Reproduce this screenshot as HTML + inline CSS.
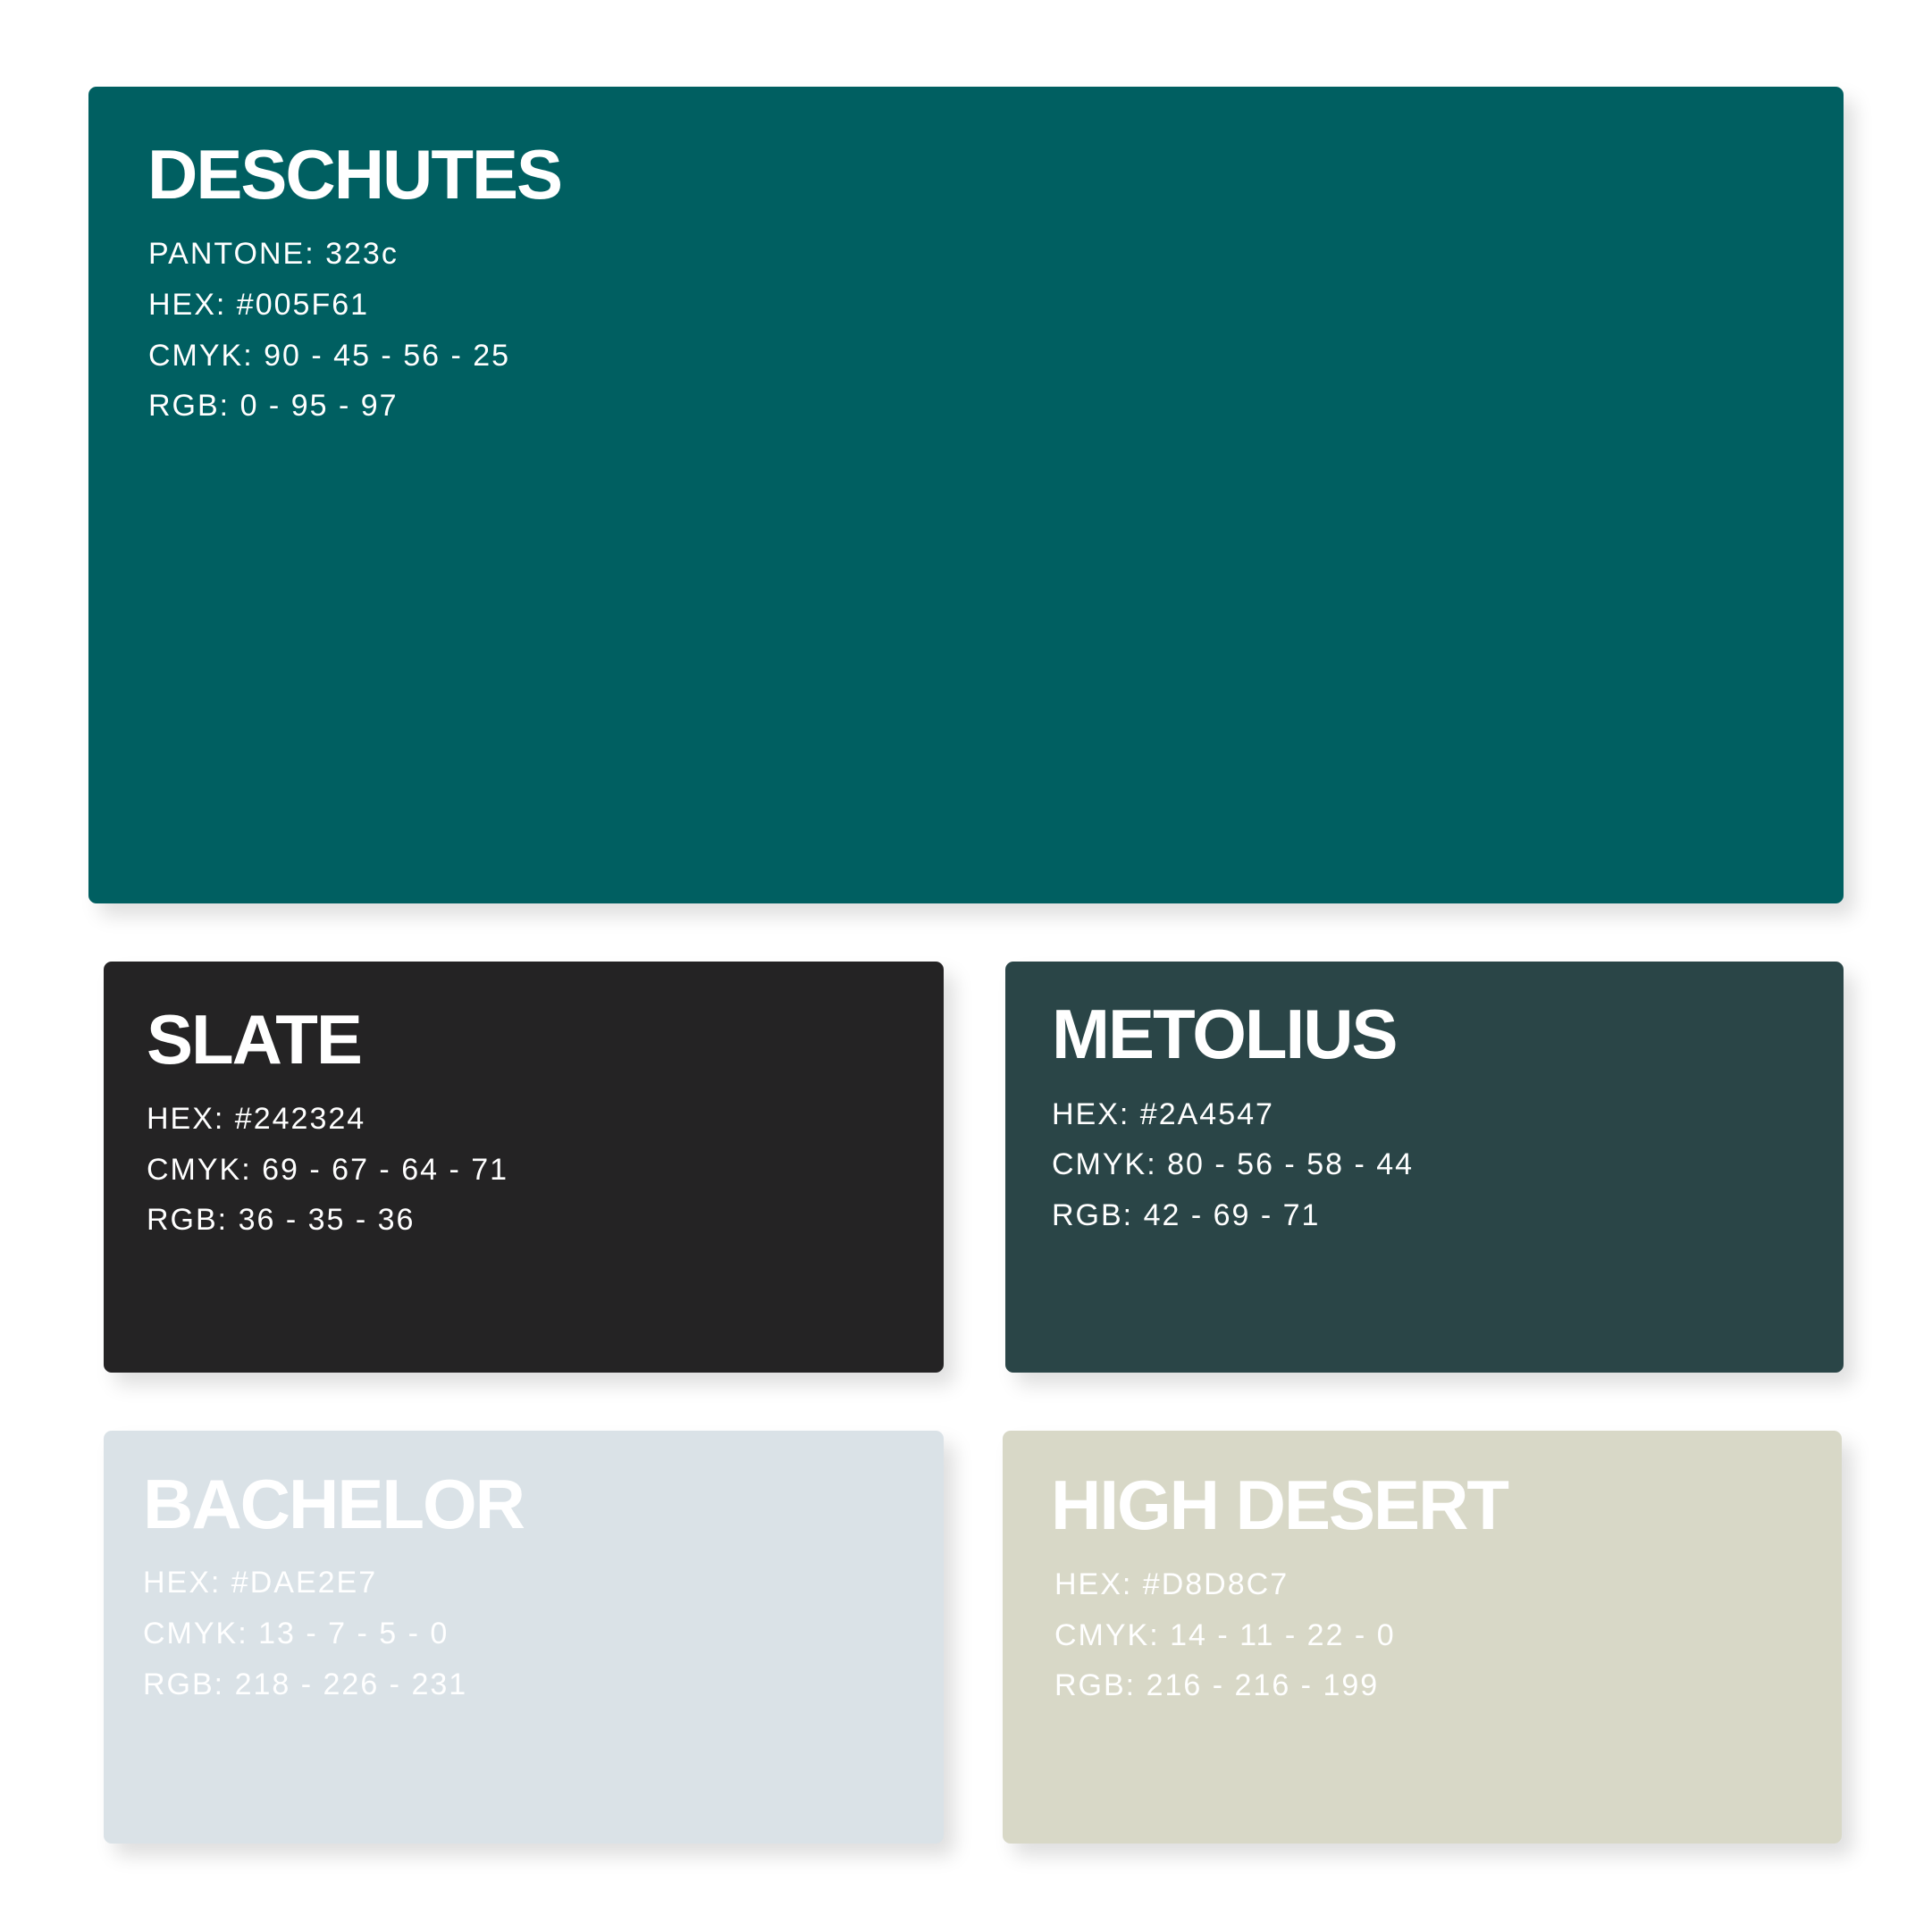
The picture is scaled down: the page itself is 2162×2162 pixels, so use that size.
<!DOCTYPE html>
<html><head><meta charset="utf-8"><style>
html,body{margin:0;padding:0;background:#fff;}
body{width:2162px;height:2162px;position:relative;overflow:hidden;font-family:"Liberation Sans",sans-serif;}
.card{position:absolute;border-radius:9px;box-shadow:12px 14px 22px rgba(0,0,0,0.13);}
.t{position:absolute;color:#fff;font-weight:bold;font-size:78px;line-height:78px;letter-spacing:-2px;white-space:nowrap;}
.l{position:absolute;color:#fff;font-size:34px;line-height:34px;letter-spacing:2px;white-space:nowrap;}
</style></head><body>
<div class="card" style="left:99px;top:97px;width:1964px;height:914px;background:#005F61"></div>
<div class="card" style="left:116px;top:1076px;width:940px;height:460px;background:#242324"></div>
<div class="card" style="left:1125px;top:1076px;width:938px;height:460px;background:#2A4547"></div>
<div class="card" style="left:116px;top:1601px;width:940px;height:462px;background:#DAE2E7"></div>
<div class="card" style="left:1122px;top:1601px;width:939px;height:462px;background:#D8D8C7"></div>

<div class="t" style="left:165px;top:156px">DESCHUTES</div>
<div class="l" style="left:166px;top:267px">PANTONE: 323c</div>
<div class="l" style="left:166px;top:324px">HEX: #005F61</div>
<div class="l" style="left:166px;top:381px">CMYK: 90 - 45 - 56 - 25</div>
<div class="l" style="left:166px;top:437px">RGB: 0 - 95 - 97</div>

<div class="t" style="left:164px;top:1124px">SLATE</div>
<div class="l" style="left:164px;top:1235px">HEX: #242324</div>
<div class="l" style="left:164px;top:1292px">CMYK: 69 - 67 - 64 - 71</div>
<div class="l" style="left:164px;top:1348px">RGB: 36 - 35 - 36</div>

<div class="t" style="left:1177px;top:1118px">METOLIUS</div>
<div class="l" style="left:1177px;top:1230px">HEX: #2A4547</div>
<div class="l" style="left:1177px;top:1286px">CMYK: 80 - 56 - 58 - 44</div>
<div class="l" style="left:1177px;top:1343px">RGB: 42 - 69 - 71</div>

<div class="t" style="left:160px;top:1644px">BACHELOR</div>
<div class="l" style="left:160px;top:1754px">HEX: #DAE2E7</div>
<div class="l" style="left:160px;top:1811px">CMYK: 13 - 7 - 5 - 0</div>
<div class="l" style="left:160px;top:1868px">RGB: 218 - 226 - 231</div>

<div class="t" style="left:1176px;top:1645px">HIGH DESERT</div>
<div class="l" style="left:1180px;top:1756px">HEX: #D8D8C7</div>
<div class="l" style="left:1180px;top:1813px">CMYK: 14 - 11 - 22 - 0</div>
<div class="l" style="left:1180px;top:1869px">RGB: 216 - 216 - 199</div>
</body></html>
